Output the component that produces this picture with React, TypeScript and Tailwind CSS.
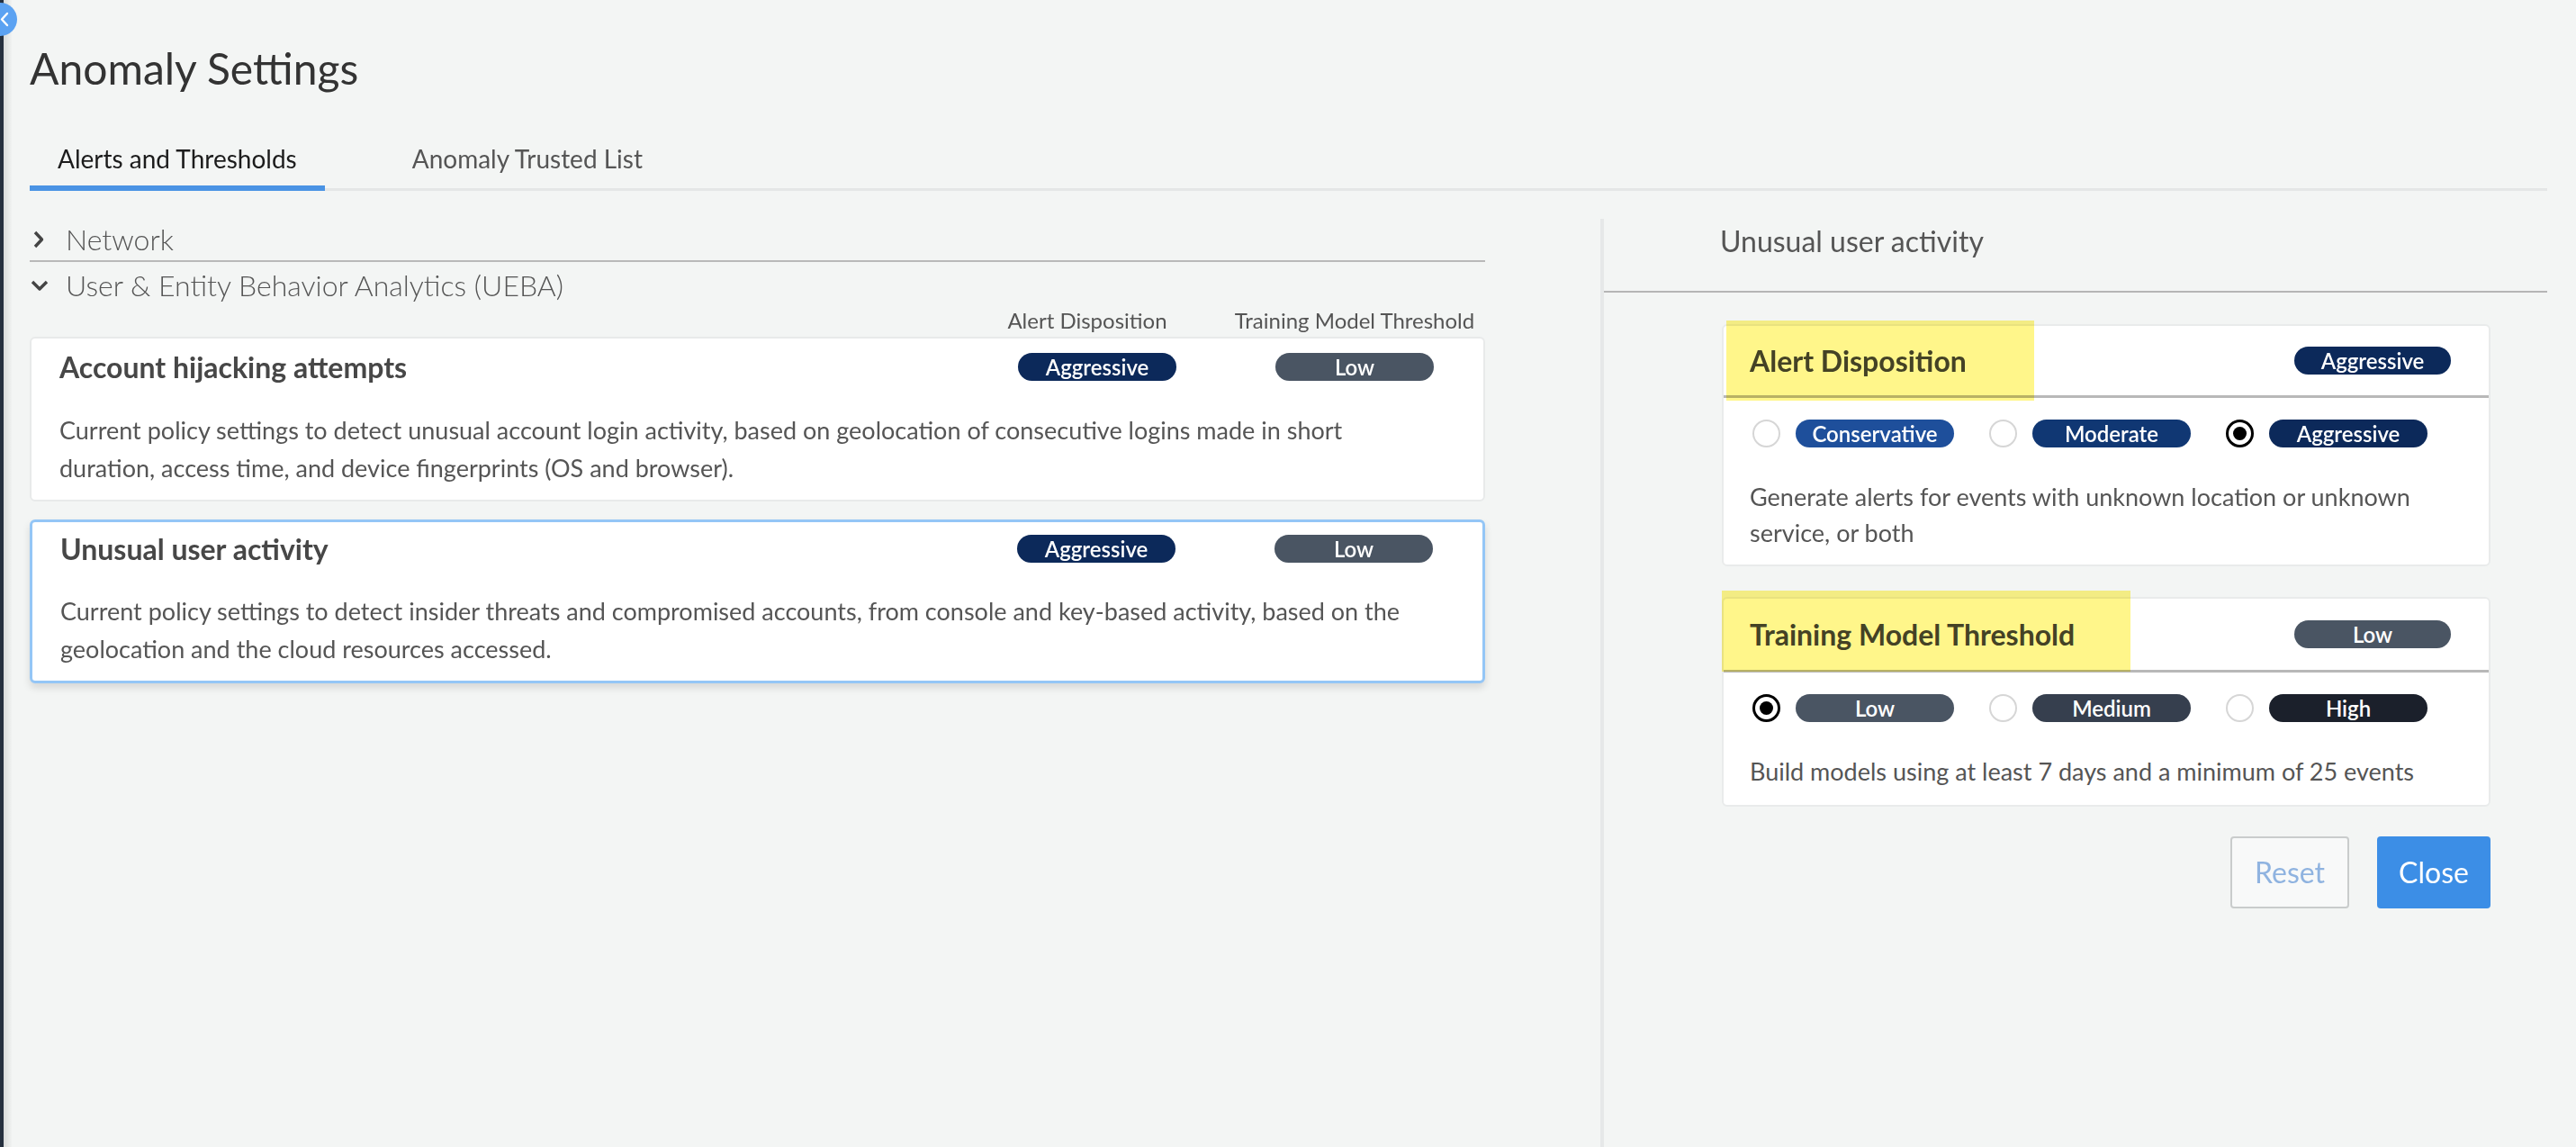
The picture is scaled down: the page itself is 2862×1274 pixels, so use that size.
import React from "react";

type PillProps = { label: string; color: string; width?: string };

function Pill({ label, color, width = "w-[176px]" }: PillProps) {
  return (
    <span
      className={`inline-flex items-center justify-center h-[31px] rounded-full text-white text-[24px] font-semibold leading-none ${color} ${width}`}
    >
      {label}
    </span>
  );
}

function Radio({ checked }: { checked?: boolean }) {
  if (checked) {
    return (
      <span className="w-[31px] h-[31px] shrink-0 rounded-full border-[3px] border-black bg-white flex items-center justify-center">
        <span className="w-[15px] h-[15px] rounded-full bg-black" />
      </span>
    );
  }
  return <span className="w-[31px] h-[31px] shrink-0 rounded-full border-2 border-[#d6d6d6] bg-white" />;
}

interface PolicyCardProps {
  title: string;
  desc: string;
  active?: boolean;
}

function PolicyCard({ title, desc, active }: PolicyCardProps) {
  return (
    <div
      className={
        active
          ? "rounded-md border-[3px] border-[#94c6f6] bg-white pt-[14px] pb-[14px] shadow-[0_5px_8px_rgba(0,0,0,0.12)]"
          : "rounded-md border-2 border-[#e8eaea] bg-white pt-[16px] pb-[14px]"
      }
    >
      <div className="flex items-center h-[31px]">
        <div className="flex-1 pl-[31px] text-[32px] font-bold text-[#474747] leading-none">{title}</div>
        <div className="w-[286px] flex justify-center">
          <Pill label="Aggressive" color="bg-[#0c295a]" />
        </div>
        <div className="w-[286px] flex justify-center">
          <Pill label="Low" color="bg-[#4a5563]" />
        </div>
      </div>
      <p className={`${active ? "mt-[33px]" : "mt-[34px]"} pl-[31px] pr-[74px] text-[27px] leading-[42px] text-[#555]`}>
        {desc}
      </p>
    </div>
  );
}

interface Option {
  label: string;
  color: string;
  checked?: boolean;
}

interface SettingCardProps {
  title: string;
  pill: { label: string; color: string };
  options: Option[];
  desc: string;
  highlight: string;
  head: string;
  pb: string;
}

function SettingCard({ title, pill, options, desc, highlight, head, pb }: SettingCardProps) {
  return (
    <div className={`relative w-[854px] bg-white rounded-md border-2 border-[#e9ebeb] ${pb}`}>
      <div className={`${head} flex items-center justify-between pl-[29px] pr-[42px] border-b-[3px] border-[#b8b8b8]`}>
        <span className="text-[32px] font-bold text-[#444] leading-none">{title}</span>
        <Pill label={pill.label} color={pill.color} width="w-[174px]" />
      </div>
      <div className="flex items-center gap-[39px] pl-[32px] pt-[24px]">
        {options.map((o) => (
          <div key={o.label} className="flex items-center gap-[17px]">
            <Radio checked={o.checked} />
            <Pill label={o.label} color={o.color} />
          </div>
        ))}
      </div>
      <p className="mt-[35px] pl-[29px] pr-[30px] text-[27px] leading-[40px] text-[#555]">{desc}</p>
      {/* highlighter mark over the header */}
      <div className={`absolute bg-[#fff68a] mix-blend-multiply pointer-events-none ${highlight}`} />
    </div>
  );
}

export default function App() {
  return (
    <div className="relative flex h-[1274px] w-full overflow-hidden bg-[#f3f5f4] [font-family:Lato,'Open_Sans',sans-serif]">
      {/* left edge of the host app */}
      <div className="w-[4px] shrink-0 bg-[#25303e]" />
      <div className="absolute left-[4px] top-0 h-full w-[10px] bg-gradient-to-r from-[#0000001c] to-transparent" />
      <div className="absolute left-[-18px] top-[3px] w-[37px] h-[37px] rounded-full bg-[#5ba2f2]">
        <svg className="absolute left-[18px] top-[10px]" width="10" height="17" viewBox="0 0 10 17" fill="none">
          <path d="M8 2 L2 8.5 L8 15" stroke="white" strokeWidth="2.4" strokeLinecap="round" strokeLinejoin="round" />
        </svg>
      </div>

      <div className="flex-1 flex flex-col pl-[29px] pr-[32px] pt-[47px]">
        <h1 className="text-[48px] leading-[58px] text-[#333] font-normal">Anomaly Settings</h1>

        <div className="mt-[56px] flex border-b-[3px] border-[#e4e6e6]">
          <div className="-mb-[3px] px-[31px] pb-[14px] border-b-[6px] border-[#4a93e4] text-[28px] leading-[31px] text-[#1c1c1c]">
            Alerts and Thresholds
          </div>
          <div className="ml-[66px] px-[31px] pb-[14px] text-[28px] leading-[31px] text-[#555]">Anomaly Trusted List</div>
        </div>

        <div className="mt-[31px] flex flex-1">
          {/* left pane */}
          <div className="w-[1617px] shrink-0">
            <div className="h-[48px] flex items-center border-b-2 border-[#b9b9b9]">
              <span className="w-[26px] flex">
                <svg className="ml-[3px]" width="14" height="22" viewBox="0 0 14 22" fill="none">
                  <path d="M3 3 L10.5 11 L3 19" stroke="#444" strokeWidth="3.4" strokeLinejoin="round" />
                </svg>
              </span>
              <span className="ml-[14px] text-[32px] font-light text-[#555]">Network</span>
            </div>
            <div className="h-[52px] flex items-center">
              <span className="w-[26px] flex">
                <svg width="22" height="14" viewBox="0 0 22 14" fill="none">
                  <path d="M3 3 L11 11 L19 3" stroke="#444" strokeWidth="3.4" strokeLinejoin="round" />
                </svg>
              </span>
              <span className="ml-[14px] text-[32px] font-light text-[#555]">User &amp; Entity Behavior Analytics (UEBA)</span>
            </div>
            <div className="h-[26px] flex justify-end items-center pr-[2px] text-[24px] text-[#555]">
              <div className="w-[286px] pr-[22px] text-center">Alert Disposition</div>
              <div className="w-[286px] text-center">Training Model Threshold</div>
            </div>
            <div className="mt-[5px] flex flex-col gap-[20px]">
              <PolicyCard
                title="Account hijacking attempts"
                desc="Current policy settings to detect unusual account login activity, based on geolocation of consecutive logins made in short duration, access time, and device fingerprints (OS and browser)."
              />
              <PolicyCard
                active
                title="Unusual user activity"
                desc="Current policy settings to detect insider threats and compromised accounts, from console and key-based activity, based on the geolocation and the cloud resources accessed."
              />
            </div>
          </div>

          {/* right pane */}
          <div className="ml-[128px] flex-1 border-l-4 border-[#e6e8e8]">
            <div className="h-[82px] pt-[8px] pl-[129px] border-b-2 border-[#b5b5b5] text-[32px] leading-[34px] text-[#555]">
              Unusual user activity
            </div>
            <div className="ml-[131px] mt-[35px] flex flex-col gap-[34px]">
              <SettingCard
                title="Alert Disposition"
                pill={{ label: "Aggressive", color: "bg-[#0c295a]" }}
                options={[
                  { label: "Conservative", color: "bg-[#1e4f9b]" },
                  { label: "Moderate", color: "bg-[#103773]" },
                  { label: "Aggressive", color: "bg-[#0c295a]", checked: true },
                ]}
                desc="Generate alerts for events with unknown location or unknown service, or both"
                highlight="left-[3px] -top-[6px] w-[342px] h-[89px]"
                head="h-[80px]"
                pb="pb-[15px]"
              />
              <SettingCard
                title="Training Model Threshold"
                pill={{ label: "Low", color: "bg-[#4a5563]" }}
                options={[
                  { label: "Low", color: "bg-[#4a5563]", checked: true },
                  { label: "Medium", color: "bg-[#363f4e]" },
                  { label: "High", color: "bg-[#1b202b]" },
                ]}
                desc="Build models using at least 7 days and a minimum of 25 events"
                highlight="-left-[2px] -top-[9px] w-[454px] h-[90px]"
                head="h-[82px]"
                pb="pb-[17px]"
              />
            </div>
            <div className="ml-[131px] w-[854px] mt-[33px] flex justify-end gap-[31px]">
              <button className="w-[132px] h-[80px] rounded border-2 border-[#c9cccc] bg-[#f8f9f9] text-[32px] text-[#8fb3e0]">
                Reset
              </button>
              <button className="w-[126px] h-[80px] rounded bg-[#3c8ee6] text-[32px] text-white">Close</button>
            </div>
          </div>
        </div>
      </div>
    </div>
  );
}
